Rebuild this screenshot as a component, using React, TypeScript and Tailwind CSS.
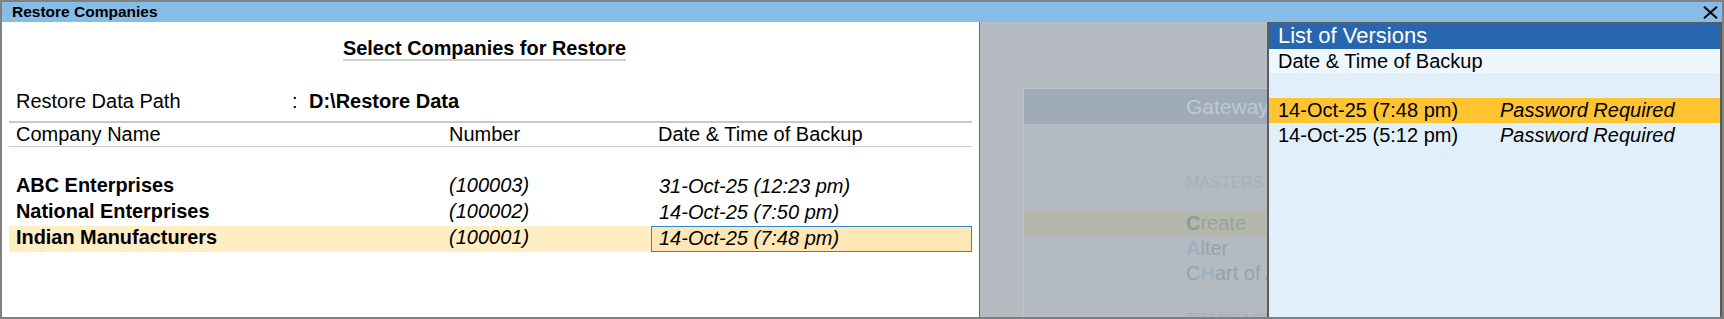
import React from "react";

const font = { fontFamily: '"Liberation Sans", Arial, sans-serif' };

const companies = [
  { name: "ABC Enterprises", number: "(100003)", date: "31-Oct-25 (12:23 pm)" },
  { name: "National Enterprises", number: "(100002)", date: "14-Oct-25 (7:50 pm)" },
  { name: "Indian Manufacturers", number: "(100001)", date: "14-Oct-25 (7:48 pm)", selected: true },
];

const versions = [
  { date: "14-Oct-25 (7:48 pm)", note: "Password Required", selected: true },
  { date: "14-Oct-25 (5:12 pm)", note: "Password Required" },
];

function CloseIcon() {
  return (
    <svg width="15" height="13" viewBox="0 0 15 13" className="mt-[1px]">
      <path d="M1 0.8 L14 12.2 M14 0.8 L1 12.2" stroke="#000" strokeWidth="2" />
    </svg>
  );
}

function RestorePanel() {
  return (
    <div className="w-[978px] shrink-0 bg-white border-r border-[#6b6b6b] flex flex-col text-black">
      {/* Heading */}
      <div className="pt-[15px] pl-[341px]">
        <span className="inline-block h-[24px] leading-[22px] border-b-2 border-[#d0d0d0] font-bold text-[19.9px]">
          Select Companies for Restore
        </span>
      </div>

      {/* Path */}
      <div className="mt-[28px] h-[22px] leading-[22px] flex pl-[14px] text-[20px]">
        <span className="w-[276px]">Restore Data Path</span>
        <span className="w-[17px]">:</span>
        <span className="font-bold">D:\Restore Data</span>
      </div>

      {/* Table */}
      <div className="mx-[7px] mt-[9px] border-t-2 border-[#c8c8c8]">
        <div className="grid grid-cols-[440px_202px_321px] h-[24px] leading-[23px] border-b border-[#c8c8c8] text-[20px]">
          <span className="pl-[7px]">Company Name</span>
          <span>Number</span>
          <span className="pl-[7px]">Date &amp; Time of Backup</span>
        </div>
        <div className="mt-[27px] flex flex-col">
          {companies.map((c) => (
            <div
              key={c.number}
              className={
                "grid grid-cols-[440px_202px_321px] h-[26px] leading-[23px] text-[20px] " +
                (c.selected ? "bg-[#FFEDC4]" : "")
              }
            >
              <span className="pl-[7px] font-bold text-[19.9px]">{c.name}</span>
              <span className="italic">{c.number}</span>
              <span
                className={
                  "italic pl-[7px] border " +
                  (c.selected ? "bg-[#FFE7B5] border-[#2a8ad0]" : "border-transparent")
                }
              >
                {c.date}
              </span>
            </div>
          ))}
        </div>
      </div>
    </div>
  );
}

function GatewayBackdrop() {
  return (
    <div className="flex-1 bg-[#B5BBC0] overflow-hidden">
      <div className="mt-[66px] ml-[43px] w-[600px] h-[400px] bg-[#B3BAC1] border-l border-t border-[#BDC3C8] whitespace-nowrap">
        <div className="h-[35px] leading-[35px] bg-[#9FABB8] pl-[162px] text-[21px] text-[#C0C8CE]">Gateway</div>
        <div className="mt-[47px] h-[24px] leading-[24px] pl-[162px] text-[16px] text-[#A6B1BD]">MASTERS</div>
        <div className="mt-[16px] h-[25px] leading-[25px] bg-[#B4B7A9] pl-[162px] text-[20px] text-[#9AA2A9]">
          <span className="font-bold text-[#8E99A2]">C</span>reate
        </div>
        <div className="h-[25px] leading-[25px] pl-[162px] text-[20px] text-[#99A1A8]">
          <span className="font-bold text-[#A0AFBF]">A</span>lter
        </div>
        <div className="h-[25px] leading-[25px] pl-[162px] text-[20px] text-[#99A1A8]">
          C<span className="font-bold text-[#A3B2C2]">H</span>art of Accounts
        </div>
        <div className="mt-[22px] h-[24px] leading-[24px] pl-[162px] text-[16px] text-[#A6B1BD]">TRANSACTIONS</div>
      </div>
    </div>
  );
}

function VersionsPopup() {
  return (
    <div className="w-[455px] shrink-0 flex flex-col border-l-2 border-r-2 border-t border-[#5c5c5c] text-black">
      <div className="h-[26px] leading-[26px] bg-[#2966B0] pl-[9px] text-white text-[22px]">List of Versions</div>
      <div className="h-[24px] leading-[24px] bg-[#EEF7FE] pl-[9px] text-[20px]">Date &amp; Time of Backup</div>
      <div className="flex-1 bg-[#E1EFFA] flex flex-col">
        <div className="h-[25px]" />
        {versions.map((v) => (
          <div
            key={v.date}
            className={"h-[25px] leading-[25px] flex pl-[9px] text-[20px] " + (v.selected ? "bg-[#FFC42F]" : "")}
          >
            <span className="w-[222px]">{v.date}</span>
            <span className="italic">{v.note}</span>
          </div>
        ))}
      </div>
    </div>
  );
}

export default function App() {
  return (
    <div style={font} className="w-[1724px] h-[319px] border-2 border-[#808080] flex flex-col overflow-hidden">
      <div className="h-[20px] shrink-0 bg-[#87BCE6] flex items-center justify-between pl-[10px] pr-[4px]">
        <span className="font-bold text-[15.5px] leading-[20px] text-black">Restore Companies</span>
        <CloseIcon />
      </div>
      <div className="flex-1 flex min-h-0">
        <RestorePanel />
        <GatewayBackdrop />
        <VersionsPopup />
      </div>
    </div>
  );
}
